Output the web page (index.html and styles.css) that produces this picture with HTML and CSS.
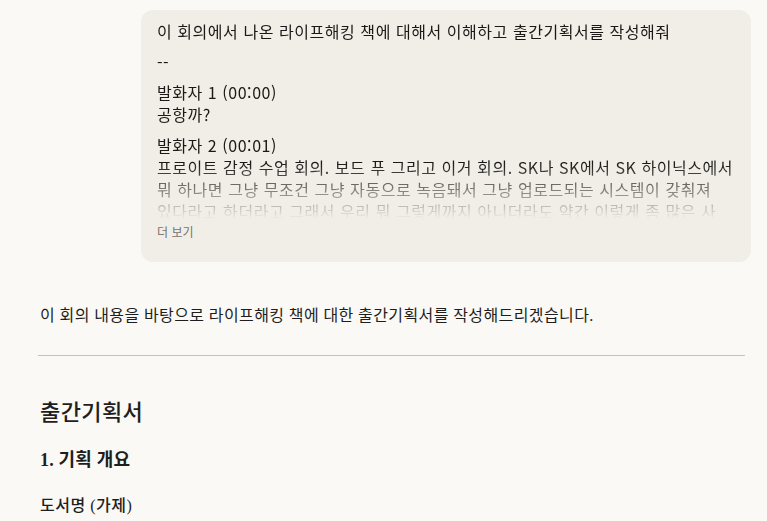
FILE: index.html
```html
<!DOCTYPE html>
<html lang="ko">
<head>
<meta charset="utf-8">
<link rel="stylesheet" href="styles.css">
</head>
<body>
<main class="chat">
  <div class="user-row">
    <div class="bubble">
      <div class="bubble-text">
        <p>이 회의에서 나온 라이프해킹 책에 대해서 이해하고 출간기획서를 작성해줘</p>
        <p>--</p>
        <p>발화자 1 (00:00)<br>공항까?</p>
        <p>발화자 2 (00:01)<br>프로이트 감정 수업 회의. 보드 푸 그리고 이거 회의. SK나 SK에서 SK 하이닉스에서<br>뭐 하나면 그냥 무조건 그냥 자동으로 녹음돼서 그냥 업로드되는 시스템이 갖춰져<br>있다라고 하더라고 그래서 우리 뭐 그렇게까지 아니더라도 약간 이렇게 좀 많은 사<br>람들이 모여서 이야기하는 것을</p>
      </div>
      <div class="more">더 보기</div>
    </div>
  </div>
  <article class="reply">
    <p class="intro">이 회의 내용을 바탕으로 라이프해킹 책에 대한 출간기획서를 작성해드리겠습니다.</p>
    <hr class="rule">
    <h1 class="title">출간기획서</h1>
    <h2 class="section"><span class="num">1.</span> 기획 개요</h2>
    <h3 class="sub">도서명 (가제)</h3>
  </article>
</main>
</body>
</html>
```
FILE: styles.css
```css
html, body {
  margin: 0;
  padding: 0;
  background: #faf9f5;
  color: #1f1e1d;
}
.chat {
  padding: 10px 16px 0 38px;
}
.user-row {
  display: flex;
  justify-content: flex-end;
}
.bubble {
  width: 610px;
  box-sizing: border-box;
  background: #f0eee6;
  border-radius: 12px;
  padding: 10px 16px 22px 16px;
  font-family: "Noto Sans CJK KR", "Noto Sans", sans-serif;
  font-size: 16px;
  line-height: 22px;
  letter-spacing: 0.55px;
  color: #1a1918;
}
.bubble-text {
  max-height: 199px;
  overflow: hidden;
  -webkit-mask-image: linear-gradient(to bottom, #000 0%, #000 72%, transparent 100%);
  mask-image: linear-gradient(to bottom, #000 0%, #000 72%, transparent 100%);
}
.bubble-text p {
  margin: 0 0 8.7px 0;
  white-space: nowrap;
}
.more {
  margin-top: 5px;
  font-size: 12px;
  line-height: 16px;
  letter-spacing: 0;
  color: #77746d;
}
.reply {
  font-family: "Liberation Serif", "Noto Sans CJK KR", serif;
  color: #1f1e1d;
}
.intro {
  margin: 41px 0 0 2px;
  font-size: 16px;
  line-height: 26px;
  letter-spacing: 0.4px;
}
.rule {
  margin: 26px 6px 0 0;
  border: 0;
  border-top: 1px solid #c4c1bb;
  height: 0;
}
.title {
  margin: 42px 0 0 2px;
  font-size: 22px;
  line-height: 30px;
  font-weight: 500;
  letter-spacing: 0.4px;
}
.section {
  margin: 19px 0 0 2px;
  font-size: 18px;
  line-height: 26px;
  font-weight: 700;
  letter-spacing: 0.2px;
}
.num {
  font-weight: 700;
}
.sub {
  margin: 20px 0 0 2px;
  font-size: 16px;
  line-height: 26px;
  font-weight: 500;
  letter-spacing: 0.5px;
}
```
